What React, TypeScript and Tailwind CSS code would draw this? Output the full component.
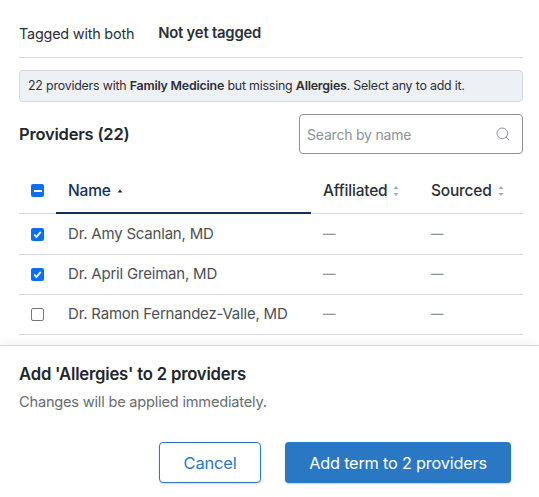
import React from 'react';
import { Search } from 'lucide-react';

const rows = [
  { name: 'Dr. Amy Scanlan, MD', checked: true },
  { name: 'Dr. April Greiman, MD', checked: true },
  { name: 'Dr. Ramon Fernandez-Valle, MD', checked: false },
];

const CheckBox = ({ checked }: { checked: boolean }) =>
  checked ? (
    <div className="w-[13px] h-[13px] rounded-[2px] bg-[#0b6ff0] flex items-center justify-center">
      <svg width="9" height="9" viewBox="0 0 9 9" fill="none">
        <path d="M1.2 4.6 L3.5 6.9 L7.8 1.9" stroke="white" strokeWidth="1.8" />
      </svg>
    </div>
  ) : (
    <div className="w-[13px] h-[13px] rounded-[2px] border border-[#767676] bg-white" />
  );

const SortIcon = () => (
  <svg width="6" height="14" viewBox="0 0 6 14" className="ml-[6px]">
    <path d="M3 2 L5.5 5 L0.5 5 Z" fill="#a8adb5" />
    <path d="M3 12 L5.5 9 L0.5 9 Z" fill="#a8adb5" />
  </svg>
);

export default function App() {
  return (
    <div className="w-[539px] h-[497px] overflow-hidden bg-white flex flex-col font-['Inter',sans-serif] tracking-[-0.2px]">
      <div className="pl-[19px] pr-[16px] flex-1 min-h-0">
        <div className="h-[58px] border-b border-[#d5d6dc] flex items-center gap-[24px] pt-[10px] text-[#2b2f36]">
          <span className="text-[14.4px]">Tagged with both</span>
          <span className="text-[14.8px] font-semibold">Not yet tagged</span>
        </div>

        <div className="mt-[12px] h-[32px] rounded-[4px] border border-[#d5d8de] bg-[#edf0f5] flex items-center px-[8px] text-[12.4px] text-[#2b2f36] whitespace-nowrap">
          <span>
            22 providers with <b className="font-semibold">Family Medicine</b> but missing{' '}
            <b className="font-semibold">Allergies</b>. Select any to add it.
          </span>
        </div>

        <div className="mt-[12px] flex items-center justify-between">
          <h2 className="text-[16.5px] font-semibold text-[#22262c]">Providers (22)</h2>
          <div className="w-[224px] h-[40px] rounded-[4px] border border-[#8c8f94] flex items-center justify-between pl-[7px] pr-[11px]">
            <span className="text-[14px] text-[#8d9198]">Search by name</span>
            <Search className="w-[16px] h-[16px] text-[#8d9198]" strokeWidth={1.5} />
          </div>
        </div>

        <div className="mt-[14px] grid grid-cols-[37px_255px_108px_104px] grid-rows-[46px_41px_40px_40px] text-[15px]">
          <div className="border-b border-[#d5d6dc] flex items-center pl-[12px]">
            <div className="w-[13px] h-[13px] rounded-[2px] bg-[#0b6ff0] flex items-center justify-center">
              <div className="w-[8px] h-[2px] bg-white" />
            </div>
          </div>
          <div className="border-b-2 border-[#12305a] flex items-center pl-[12px] pt-[1px] font-medium text-[#12305a] text-[15.5px]">
            Name
            <svg width="6" height="4" viewBox="0 0 6 4" className="ml-[6px]">
              <path d="M3 0.5 L5.5 3.5 L0.5 3.5 Z" fill="#12305a" />
            </svg>
          </div>
          <div className="border-b border-[#d5d6dc] flex items-center pl-[12px] pt-[1px] font-medium text-[#2b2f36] text-[15.5px]">
            Affiliated
            <SortIcon />
          </div>
          <div className="border-b border-[#d5d6dc] flex items-center pl-[12px] pt-[1px] font-medium text-[#2b2f36] text-[15.5px]">
            Sourced
            <SortIcon />
          </div>

          {rows.map(r => (
            <React.Fragment key={r.name}>
              <div className="border-b border-[#d5d6dc] flex items-center pl-[12px]">
                <CheckBox checked={r.checked} />
              </div>
              <div className="border-b border-[#d5d6dc] flex items-center pl-[12px] text-[#4b4f56] whitespace-nowrap">
                {r.name}
              </div>
              <div className="border-b border-[#d5d6dc] flex items-center pl-[12px] text-[#8d9198] text-[12.5px] font-semibold">—</div>
              <div className="border-b border-[#d5d6dc] flex items-center pl-[12px] text-[#8d9198] text-[12.5px] font-semibold">—</div>
            </React.Fragment>
          ))}
        </div>
      </div>

      <div className="h-[152px] shrink-0 border-t border-[#d5d6dc] bg-white shadow-[0_-4px_8px_rgba(0,0,0,0.04)] relative px-[19px] pt-[18px]">
        <div className="text-[16.7px] font-semibold text-[#22262c] leading-[20px]">Add 'Allergies' to 2 providers</div>
        <div className="mt-[8px] text-[14.6px] text-[#676b72] leading-[20px]">Changes will be applied immediately.</div>
        <div className="mt-[30px] flex gap-[24px] pl-[140px]">
          <button className="w-[102px] h-[41px] pt-[2px] rounded-[4px] border border-[#2a77c4] bg-white text-[#2a77c4] text-[16.5px] shadow-[0_1px_2px_rgba(0,0,0,0.15)]">
            Cancel
          </button>
          <button className="w-[226px] h-[41px] pt-[2px] rounded-[4px] bg-[#2a77c4] text-white text-[16.3px] shadow-[0_1px_2px_rgba(0,0,0,0.2)]">
            Add term to 2 providers
          </button>
        </div>
      </div>
    </div>
  );
}
